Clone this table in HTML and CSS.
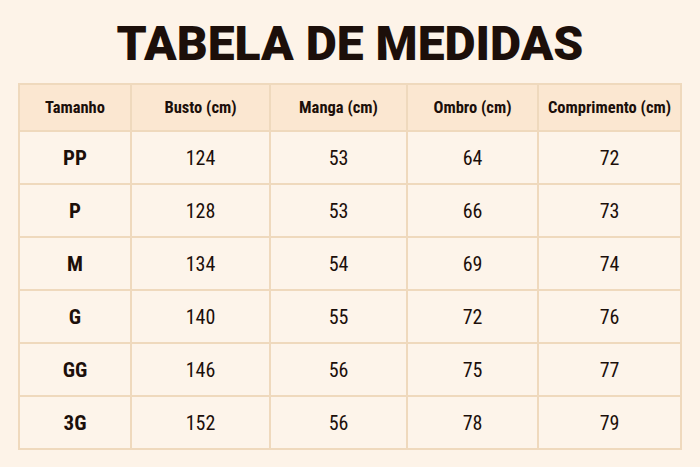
FILE: index.html
```html
<!DOCTYPE html>
<html lang="pt">
<head>
<meta charset="utf-8">
<link rel="stylesheet" href="styles.css">
</head>
<body>
<main class="page">
  <h1 class="title">TABELA DE MEDIDAS</h1>
  <table class="sizes">
    <thead>
      <tr><th>Tamanho</th><th>Busto (cm)</th><th>Manga (cm)</th><th>Ombro (cm)</th><th>Comprimento (cm)</th></tr>
    </thead>
    <tbody>
      <tr><td class="size">PP</td><td>124</td><td>53</td><td>64</td><td>72</td></tr>
      <tr><td class="size">P</td><td>128</td><td>53</td><td>66</td><td>73</td></tr>
      <tr><td class="size">M</td><td>134</td><td>54</td><td>69</td><td>74</td></tr>
      <tr><td class="size">G</td><td>140</td><td>55</td><td>72</td><td>76</td></tr>
      <tr><td class="size">GG</td><td>146</td><td>56</td><td>75</td><td>77</td></tr>
      <tr><td class="size">3G</td><td>152</td><td>56</td><td>78</td><td>79</td></tr>
    </tbody>
  </table>
</main>
</body>
</html>
```
FILE: styles.css
```css
html, body { margin: 0; padding: 0; }
body {
  background: #fdf3e8;
  width: 700px;
  height: 467px;
  overflow: hidden;
  color: #1c0f0a;
}
.page {
  padding: 0 18px 0 18px;
}
.title {
  margin: 0;
  height: 83px;
  line-height: 88px;
  text-align: center;
  font-family: "Roboto", sans-serif;
  font-weight: 900;
  font-size: 48px;
  letter-spacing: 0;
  color: #1c0f0a;
}
.sizes {
  width: 664px;
  border-collapse: collapse;
  table-layout: fixed;
  font-family: "Roboto Condensed", "Liberation Sans Narrow", "DejaVu Sans Condensed", "Roboto", sans-serif;
  font-stretch: condensed;
  background: #fdf4ea;
}
.sizes th, .sizes td {
  border: 2px solid #efd9bd;
  text-align: center;
  padding: 0;
}
.sizes th {
  background: #fbe7d1;
  height: 45px;
  font-size: 16.5px;
  font-weight: 700;
}
.sizes td {
  height: 51px;
  font-size: 20px;
  font-weight: 400;
}
.sizes td.size {
  font-weight: 700;
  font-size: 21px;
}
.sizes th:nth-child(1) { width: 110px; }
.sizes th:nth-child(2) { width: 137px; }
.sizes th:nth-child(3) { width: 135px; }
.sizes th:nth-child(4) { width: 129px; }
```
